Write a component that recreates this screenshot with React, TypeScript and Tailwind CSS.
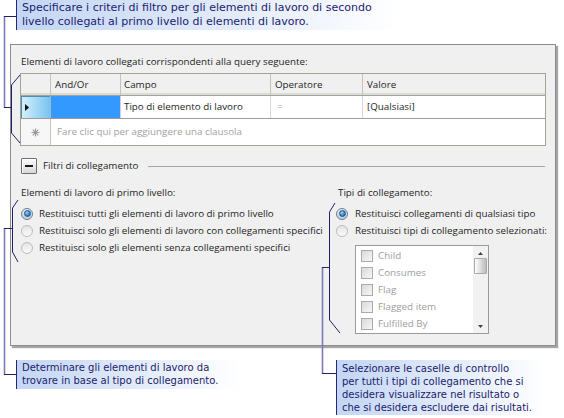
import React from "react";

const panelFont = "font-['Open_Sans',sans-serif] text-[9.8px] leading-[14px] text-[#1e1e1e] whitespace-nowrap";

function Radio({ checked }: { checked?: boolean }) {
  if (checked) {
    return (
      <span className="w-[12px] h-[12px] shrink-0 rounded-full border border-[#6a7f95] bg-linear-to-b from-[#e9eef3] to-[#c3ced9] flex items-center justify-center">
        <span className="w-[7px] h-[7px] rounded-full border border-[#1d4f86] bg-radial-[at_35%_30%] from-[#9fd8ff] via-[#3b8fd6] to-[#1b5fa6]" />
      </span>
    );
  }
  return (
    <span className="w-[12px] h-[12px] shrink-0 rounded-full border border-[#bcbcbc] bg-linear-to-b from-[#e4e4e4] to-[#fbfbfb]" />
  );
}

function Check() {
  return (
    <span className="w-[12px] h-[12px] shrink-0 border border-[#ababab] bg-linear-to-br from-[#d9d9d9] to-[#f8f8f8]" />
  );
}

function Callout({ children, className }: { children: React.ReactNode; className: string }) {
  return (
    <div
      className={
        "border-l border-[#25257a] bg-linear-to-r from-[#c3d6f4] via-[#dfe9f9] to-white text-[#1c1c6e] font-['DejaVu_Sans',sans-serif] whitespace-nowrap pl-[5px] " +
        className
      }
    >
      {children}
    </div>
  );
}

const linkTypes = ["Child", "Consumes", "Flag", "Flagged item", "Fulfilled By"];

export default function App() {
  return (
    <div className="relative w-[564px] h-[418px] overflow-hidden bg-white">
      {/* top callout */}
      <Callout className="ml-[16px] w-[384px] h-[30px] pt-[1px] text-[11px] leading-[14px]">
        <div>Specificare i criteri di filtro per gli elementi di lavoro di secondo</div>
        <div>livello collegati al primo livello di elementi di lavoro.</div>
      </Callout>

      {/* dialog panel */}
      <div
        className={
          "mt-[14px] ml-[10px] w-[546px] h-[302px] border border-[#8b8b8b] bg-[#f0f0f0] shadow-[2px_2px_1px_rgba(0,0,0,0.35)] px-[10px] pt-[10px] " +
          panelFont
        }
      >
        <div>Elementi di lavoro collegati corrispondenti alla query seguente:</div>

        {/* query grid */}
        <div className="-mx-[1px] mt-[4px] border border-[#a4a493] bg-white">
          <div className="flex h-[22px] bg-[#f0f0f0] border-b border-[#a3a3a3] shadow-[inset_0_-2px_0_#dcdcd2]">
            <div className="w-[30px] border-r border-[#c4c4bc]" />
            <div className="w-[70px] border-r border-[#c4c4bc] pl-[4px] flex items-center">And/Or</div>
            <div className="w-[150px] border-r border-[#c4c4bc] pl-[3px] flex items-center">Campo</div>
            <div className="w-[92px] border-r border-[#c4c4bc] pl-[4px] flex items-center">Operatore</div>
            <div className="flex-1 pl-[4px] flex items-center">Valore</div>
          </div>
          <div className="flex h-[23px] border-b border-[#9c9c9c]">
            <div className="w-[30px] border-r border-[#9fb9c6] bg-linear-to-r from-[#d6f1fc] to-[#78c3ee] shadow-[inset_1px_1px_0_#4f8fae] flex items-center pl-[4px]">
              <svg width="4" height="7" viewBox="0 0 4 7">
                <path d="M0 0 L4 3.5 L0 7 Z" fill="#111" />
              </svg>
            </div>
            <div className="w-[70px] border-r border-[#d0d0d0] bg-[#3399ff]" />
            <div className="w-[150px] border-r border-[#d8d8d8] pl-[3px] flex items-center">Tipo di elemento di lavoro</div>
            <div className="w-[92px] border-r border-[#d8d8d8] pl-[6px] flex items-center text-[#a8a8a8]">=</div>
            <div className="flex-1 pl-[4px] flex items-center">[Qualsiasi]</div>
          </div>
          <div className="flex h-[26px]">
            <div className="w-[30px] border-r border-[#c8c8c0] bg-[#f7f7f7] flex items-center justify-center">
              <svg width="9" height="9" viewBox="0 0 9 9" stroke="#9a9a9a" strokeWidth="1.1">
                <path d="M4.5 0.5 V8.5 M0.5 4.5 H8.5 M1.7 1.7 L7.3 7.3 M7.3 1.7 L1.7 7.3" />
              </svg>
            </div>
            <div className="flex-1 pl-[6px] flex items-center text-[#a2a2a2]">Fare clic qui per aggiungere una clausola</div>
          </div>
        </div>

        {/* link filters header */}
        <div className="mt-[12px] h-[16px] flex items-center">
          <div className="w-[16px] h-[16px] border border-[#6f6f6f] rounded-[1px] bg-linear-to-b from-[#fbfbfb] to-[#d8d8d8] shadow-[inset_1px_1px_0_#ffffff] flex items-center justify-center">
            <span className="w-[8px] h-[2px] bg-[#1a1a1a]" />
          </div>
          <span className="ml-[6px]">Filtri di collegamento</span>
          <span className="flex-1 ml-[10px] h-px bg-[#a6a6a6]" />
        </div>

        {/* two columns */}
        <div className="mt-[12px] flex">
          <div className="w-[315px] shrink-0">
            <div>Elementi di lavoro di primo livello:</div>
            <div className="mt-[5px]">
              <div className="h-[17px] flex items-center gap-[6px]">
                <Radio checked />
                <span>Restituisci tutti gli elementi di lavoro di primo livello</span>
              </div>
              <div className="h-[17px] flex items-center gap-[6px]">
                <Radio />
                <span>Restituisci solo gli elementi di lavoro con collegamenti specifici</span>
              </div>
              <div className="h-[17px] flex items-center gap-[6px]">
                <Radio />
                <span>Restituisci solo gli elementi senza collegamenti specifici</span>
              </div>
            </div>
          </div>
          <div className="flex-1 min-w-0">
            <div className="pl-[2px]">Tipi di collegamento:</div>
            <div className="mt-[5px]">
              <div className="h-[17px] flex items-center gap-[7px]">
                <Radio checked />
                <span>Restituisci collegamenti di qualsiasi tipo</span>
              </div>
              <div className="h-[17px] flex items-center gap-[7px]">
                <Radio />
                <span>Restituisci tipi di collegamento selezionati:</span>
              </div>
            </div>
            <div className="ml-[19px] mt-[6px] w-[134px] h-[89px] border border-[#9b9b9b] bg-white flex">
              <div className="flex-1 pt-[1px] pl-[5px] text-[#9e9e9e]">
                {linkTypes.map((t) => (
                  <div key={t} className="h-[17px] flex items-center gap-[5px]">
                    <Check />
                    <span>{t}</span>
                  </div>
                ))}
              </div>
              <div className="w-[15px] bg-[#f2f2f2] flex flex-col items-center">
                <svg className="mt-[6px]" width="5" height="3" viewBox="0 0 5 3">
                  <path d="M0 3 L2.5 0 L5 3 Z" fill="#444" />
                </svg>
                <div className="mt-[3px] w-[13px] h-[16px] border border-[#a9a9a9] rounded-[1px] bg-linear-to-r from-[#ffffff] to-[#bcbcbc]" />
                <div className="flex-1" />
                <svg className="mb-[5px]" width="5" height="3" viewBox="0 0 5 3">
                  <path d="M0 0 L2.5 3 L5 0 Z" fill="#444" />
                </svg>
              </div>
            </div>
          </div>
        </div>
      </div>

      {/* bottom callouts */}
      <div className="mt-[14px] flex items-start">
        <Callout className="ml-[16px] w-[224px] h-[29px] pt-[1px] text-[10px] leading-[13px]">
          <div>Determinare gli elementi di lavoro da</div>
          <div>trovare in base al tipo di collegamento.</div>
        </Callout>
        <Callout className="ml-[96px] w-[210px] h-[55px] pt-[2px] text-[10px] leading-[13px]">
          <div>Selezionare le caselle di controllo</div>
          <div>per tutti i tipi di collegamento che si</div>
          <div>desidera visualizzare nel risultato o</div>
          <div>che si desidera escludere dai risultati.</div>
        </Callout>
      </div>

      {/* leader lines and brackets */}
      <svg className="absolute inset-0 pointer-events-none" width="564" height="418" viewBox="0 0 564 418" fill="none">
        <g stroke="#7a7ab6" strokeWidth="1.6">
          <path d="M4.5 16 V107.5" />
          <path d="M4.5 228 V374.5" />
          <path d="M322.5 267 V373.5" />
        </g>
        <g stroke="#20206c" strokeWidth="1">
          <path d="M16 16.5 H4" />
          <path d="M4 107.5 H11.5" />
          <path d="M20 75 L11.5 85 V133 L20 143" />
          <path d="M4 228.5 H12.5" />
          <path d="M18 200 L12.5 208 V252 L18 262" />
          <path d="M4 374.5 H16" />
          <path d="M322 267.5 H329.5" />
          <path d="M335 203 L329.5 212 V320 L340 333" />
          <path d="M322 373.5 H336" />
        </g>
      </svg>
    </div>
  );
}
